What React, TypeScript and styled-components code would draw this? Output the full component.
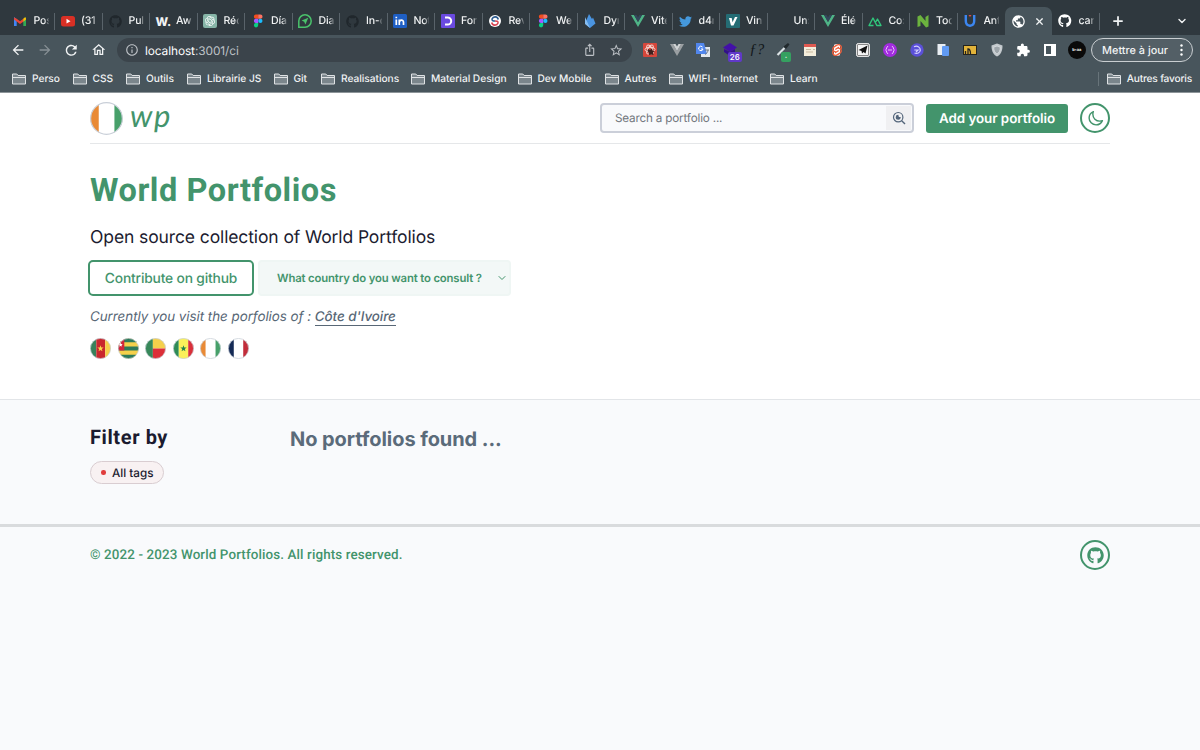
import React from "react";
import styled, { createGlobalStyle } from "styled-components";
import { FaGithub, FaTwitter } from "react-icons/fa";
import { MdArrowBack, MdArrowForward, MdRefresh, MdOutlineHome, MdInfoOutline, MdIosShare, MdStarBorder, MdExtension, MdPublic } from "react-icons/md";
import { SiSvelte, SiOpenai } from "react-icons/si";
import { HiOutlineMoon } from "react-icons/hi2";
import { Plus, X, ChevronDown } from "lucide-react";

const Global = createGlobalStyle`
  * { box-sizing: border-box; }
  body { margin: 0; background: #f9fafc; font-family: Inter, "Liberation Sans", sans-serif; overflow: hidden; text-rendering: geometricPrecision; }
  svg { display: block; flex: none; }
  button, input { font-family: inherit; text-rendering: inherit; }
`;

/* ---------- browser chrome ---------- */

const Chrome = styled.header`
  height: 93px;
  background: #48555c;
  border-bottom: 1px solid #8d9599;
  color: #f1f3f4;
`;
const TabStrip = styled.div`
  height: 35px;
  background: #2f383e;
  display: flex;
  padding: 7px 0 0 7px;
`;
const Tab = styled.div<{ $active?: boolean; $line?: boolean }>`
  position: relative;
  width: 47.5px;
  height: 28px;
  flex: none;
  display: flex;
  align-items: center;
  padding-left: 6px;
  gap: ${(p) => (p.$active ? 9 : 6.5)}px;
  border-radius: 7px 7px 0 0;
  background: ${(p) => (p.$active ? "#48555c" : "transparent")};
  &::after {
    content: "";
    display: ${(p) => (p.$line ? "block" : "none")};
    position: absolute;
    right: -0.5px;
    top: 6px;
    width: 1px;
    height: 17px;
    background: #59636a;
  }
`;
const TabIcon = styled.span`
  width: 14px;
  height: 14px;
  flex: none;
  display: grid;
  place-items: center;
`;
const TabTitle = styled.span`
  width: 15.5px;
  overflow: hidden;
  white-space: nowrap;
  font-size: 10.6px;
  letter-spacing: -0.15px;
  font-weight: 500;
  line-height: 16px;
  mask-image: linear-gradient(90deg, #000 70%, transparent 105%);
`;
const Wordmark = styled.b`
  font-size: 12px;
  font-weight: 800;
`;
const StripActions = styled.div`
  flex: 1;
  height: 28px;
  display: flex;
  align-items: center;
  justify-content: space-between;
  padding: 0 12px 0 11px;
`;
const Toolbar = styled.div`
  height: 30px;
  display: flex;
  align-items: center;
`;
const NavButtons = styled.div`
  width: 117px;
  padding-left: 5px;
  display: flex;
  & > span { width: 26.7px; display: grid; place-items: center; }
`;
const AddressBar = styled.div`
  width: 514.5px;
  height: 24px;
  border-radius: 12px;
  background: #3b444b;
  display: flex;
  align-items: center;
  padding: 0 8px 0 8px;
  color: #bdc1c6;
`;
const Url = styled.span`
  flex: 1;
  margin-left: 6px;
  font-size: 11.9px;
  letter-spacing: -0.1px;
  b { font-weight: 400; color: #fff; }
`;
const AddressActions = styled.div`
  display: flex;
  gap: 12.5px;
`;
const Extensions = styled.div`
  margin-left: 5.2px;
  display: flex;
`;
const Ext = styled.span`
  position: relative;
  width: 26.68px;
  height: 24px;
  display: grid;
  place-items: center;
`;
const ExtBadge = styled.i<{ $c: string }>`
  position: absolute;
  left: 11px;
  top: 14px;
  padding: 0 2px;
  min-width: 10px;
  height: 10px;
  border-radius: 2px;
  background: ${(p) => p.$c};
  font: 500 8px/10px Inter, sans-serif;
  text-align: center;
  color: #fff;
`;
const Formula = styled.i`
  font: italic 400 15px/16px "Liberation Serif", serif;
  color: #12171a;
`;
const Avatar = styled.span`
  width: 18px;
  height: 18px;
  border-radius: 50%;
  background: #0a0a0a;
  font-size: 4px;
  font-weight: 700;
  line-height: 18px;
  text-align: center;
`;
const SvelteDisc = styled.span`
  border-radius: 50%;
  background: linear-gradient(90deg, transparent 28%, #fff 28% 72%, transparent 72%);
`;
const UpdateButton = styled.div`
  margin-left: 1px;
  width: 102px;
  height: 24px;
  border: 1px solid #c9ced1;
  border-radius: 12px;
  background: #535f66;
  display: flex;
  align-items: center;
  justify-content: space-between;
  padding: 0 9px 0 10px;
  font-size: 10.9px;
  font-weight: 500;
  white-space: nowrap;
`;
const Bookmarks = styled.nav`
  height: 27px;
  padding: 0 8px 0 12px;
  display: flex;
  align-items: center;
`;
const Bookmark = styled.span<{ $w?: number }>`
  width: ${(p) => (p.$w ? p.$w + "px" : "auto")};
  display: flex;
  align-items: center;
  gap: 6px;
  font-size: 10.2px;
  font-weight: 500;
  letter-spacing: -0.03px;
  white-space: nowrap;
`;
const OtherBookmarks = styled.div`
  margin-left: auto;
  height: 14px;
  display: flex;
  align-items: center;
  padding-left: 8px;
  border-left: 1px solid #68747a;
  ${Bookmark} { letter-spacing: -0.2px; }
`;

/* ---------- page ---------- */

const Hero = styled.section`
  height: 307px;
  background: #fff;
  border-bottom: 1px solid #e2e5e8;
  padding: 0 90px;
`;
const SiteHeader = styled.div`
  height: 51px;
  border-bottom: 1px solid #e5e7e9;
  display: flex;
  align-items: center;
`;
const Brand = styled.div`
  flex: 1;
  display: flex;
  align-items: center;
  gap: 7px;
`;
const Script = styled.span`
  font: italic 400 31px/30px Lato, sans-serif;
  color: #43946c;
  letter-spacing: 1.5px;
  margin-top: -6px;
`;
const SearchBox = styled.div`
  width: 314px;
  height: 30px;
  border: 2px solid #cbcfd9;
  border-radius: 4px;
  background: #f9fafc;
  display: flex;
  align-items: center;
  justify-content: space-between;
  padding: 0 1px 0 13px;
  font-size: 11.7px;
  letter-spacing: -0.18px;
  color: #71767c;
`;
const SearchButton = styled.span`
  width: 25px;
  height: 24px;
  background: #f0f0f2;
  display: grid;
  place-items: center;
`;
const AddButton = styled.button`
  width: 142px;
  height: 29px;
  margin: 1px 12px 0 12px;
  padding: 1px 0 0;
  border: 0;
  border-radius: 3px;
  background: #43946c;
  color: #fff;
  font-size: 13.4px;
  letter-spacing: -0.05px;
  font-weight: 600;
  white-space: nowrap;
`;
const RoundButton = styled.span`
  width: 30px;
  height: 30px;
  border: 2px solid #43946c;
  border-radius: 50%;
  color: #43946c;
  display: grid;
  place-items: center;
`;
const Title = styled.h1`
  margin: 26px 0 0;
  font: 700 32.5px/40px Roboto, sans-serif;
  letter-spacing: 0.55px;
  color: #43946c;
`;
const Lead = styled.p`
  margin: 16px 0 0;
  font-size: 17.5px;
  letter-spacing: -0.11px;
  line-height: 24px;
  color: #1b1b2f;
  white-space: nowrap;
`;
const Actions = styled.div`
  margin: 10px 0 0 -2px;
  display: flex;
  align-items: center;
  gap: 4px;
`;
const Contribute = styled.button`
  width: 166px;
  height: 36px;
  padding: 1px 0 0;
  border: 2px solid #43946c;
  border-radius: 5px;
  background: #fff;
  color: #43946c;
  font-size: 13.8px;
  letter-spacing: -0.17px;
  font-weight: 500;
  white-space: nowrap;
`;
const CountrySelect = styled.div`
  width: 253px;
  height: 36px;
  border: 2px solid #eff6f4;
  border-radius: 4px;
  background: #f3f8f7;
  color: #43946c;
  display: flex;
  align-items: center;
  justify-content: space-between;
  padding: 0 1px 0 17px;
  font-size: 11.3px;
  letter-spacing: -0.14px;
  font-weight: 600;
  white-space: nowrap;
`;
const Visiting = styled.p`
  margin: 12px 0 0;
  font-size: 13.4px;
  letter-spacing: -0.04px;
  line-height: 19px;
  font-style: italic;
  color: #586776;
  white-space: nowrap;
  b { font-weight: 500; border-bottom: 1px solid #586776; }
`;
const FlagRow = styled.div`
  margin-top: 11px;
  display: flex;
  gap: 6.5px;
`;
const Listing = styled.section`
  height: 127px;
  border-bottom: 3px solid #d9dbdd;
  padding: 0 90px;
  display: flex;
`;
const Sidebar = styled.aside`
  width: 200px;
  padding-top: 24px;
`;
const FilterTitle = styled.h2`
  margin: 0;
  font: 700 20px/26px Roboto, sans-serif;
  letter-spacing: 0.6px;
  color: #1b1b2f;
`;
const Tag = styled.span`
  margin-top: 11px;
  width: 74px;
  height: 23px;
  border: 1px solid #d9cdd1;
  border-radius: 12px;
  background: #f8f1f2;
  display: flex;
  align-items: center;
  gap: 6.5px;
  padding-left: 10px;
  font-size: 11.7px;
  font-weight: 500;
  color: #1b1b2f;
  white-space: nowrap;
  &::before { content: ""; width: 4.5px; height: 4.5px; border-radius: 50%; background: #e03c3c; }
`;
const Empty = styled.h3`
  margin: 26px 0 0;
  font-size: 20px;
  letter-spacing: -0.07px;
  line-height: 26px;
  font-weight: 700;
  color: #5b6b7a;
`;
const Footer = styled.footer`
  padding: 13px 90px 0;
  display: flex;
  justify-content: space-between;
`;
const Copyright = styled.p`
  margin: 5px 0 0;
  font: 500 13.4px/21px Roboto, sans-serif;
  letter-spacing: 0.12px;
  color: #43946c;
`;

/* ---------- drawings ---------- */

const Svg = ({ s = 14, vb = 14, children }: { s?: number; vb?: number; children: React.ReactNode }) => (
  <svg width={s} height={s} viewBox={`0 0 ${vb} ${vb}`} fill="none">{children}</svg>
);
const Gmail = () => (
  <Svg><path d="M1 12V3l2.7 2.2V12z" fill="#4285f4" /><path d="M10.3 12V5.2L13 3v9z" fill="#34a853" /><path d="M1 3.4l2.7 1.3L7 7.3l3.3-2.6v3L7 10 3.7 7.5 1 5.6z" fill="#ea4335" /><path d="M10.3 4.7l1-1c.8-.6 1.7 0 1.7.8v1.1l-2.7 2.1z" fill="#fbbc04" /></Svg>
);
const Youtube = () => (
  <Svg><rect y="2" width="14" height="10.5" rx="2.5" fill="#d93025" /><path d="M5.5 4.8v4.8l4-2.4z" fill="#fff" /></Svg>
);
const Chat = () => (
  <Svg><rect width="14" height="14" rx="2" fill="#86b5a7" /><g transform="translate(2 2)"><SiOpenai size={10} color="#fff" /></g></Svg>
);
const Figma = () => (
  <Svg><path d="M5 .5h2.2v4.3H5a2.15 2.15 0 010-4.3z" fill="#f24e1e" /><path d="M7.2.5h2.2a2.15 2.15 0 010 4.3H7.2z" fill="#ff7262" /><path d="M5 4.8h2.2v4.3H5a2.15 2.15 0 010-4.3z" fill="#a259ff" /><circle cx="9.35" cy="6.95" r="2.15" fill="#1abcfe" /><path d="M5 9.1h2.2v2.2A2.15 2.15 0 115 9.1z" fill="#0acf83" /></Svg>
);
const Dialog = () => (
  <Svg><path d="M.8 13.2V7A6.2 6.2 0 117 13.2z" stroke="#4ac26b" strokeWidth="1.5" /><path d="M10.3 3.8L3.6 6.6l2.6 1.1 1.2 2.7z" fill="#4ac26b" /></Svg>
);
const Linked = () => (
  <Svg><rect width="14" height="14" rx="1.5" fill="#1f5fc4" /><path d="M3.3 5.5V11M3.3 2.8v1.4M6.3 11V5.5m0 3c0-3 4.2-3.2 4.2-.3V11" stroke="#fff" strokeWidth="1.7" /></Svg>
);
const Purple = () => (
  <Svg><rect width="14" height="14" rx="1" fill="#6a4ae0" /><path d="M4 3.4h2.6a3.6 3.6 0 010 7.2H4" stroke="#fff" strokeWidth="2" /></Svg>
);
const Swirl = () => (
  <Svg><circle cx="7" cy="7" r="6" fill="#fff" /><path d="M10.3 5.500A3.3 3.3 0 004 5c-.3 1.8 1.500 2 3 2" stroke="#2e5d91" strokeWidth="1.6" /><path d="M3.7 8.500a3.3 3.3 0 006.3.5c.3-1.8-1.500-2-3-2" stroke="#d94553" strokeWidth="1.6" /></Svg>
);
const Flame = () => (
  <Svg><path d="M6 0l3 5 1-1.500 2.500 6L7 14 2 9.500z" fill="#4a94e0" /><path d="M2 3l5 11L2 10z" fill="#86bdf0" /></Svg>
);
const Vue = ({ a = "#4fb487", b = "#33475b" }: { a?: string; b?: string }) => (
  <Svg><path d="M0 1h3l4 7 4-7h3L7 13z" fill={a} /><path d="M3 1h2.500L7 3.6 8.500 1H11L7 8z" fill={b} /></Svg>
);
const Vinyl = () => (
  <Svg><rect width="14" height="14" rx="1" fill="#246c74" /><path d="M3 4h2.7l.8 4.2L9 3h2.500L7.500 11.500H5z" fill="#fff" /></Svg>
);
const Nuxt = () => (
  <Svg><path d="M5.500 11.500H1L5 4l3.8 7.500H13L9.500 5 7.8 7.8" stroke="#30c67c" strokeWidth="1.4" strokeLinejoin="round" /></Svg>
);
const Node = () => (
  <Svg><path d="M1.500 13V2.500L4.500 1l5 6V3l3-2v11.500l-2.500 1-5.500-6.500v5z" fill="#6cb33e" /></Svg>
);
const Shield = () => (
  <Svg><path d="M2.8 1v6c0 3 2 4.5 4.2 4.800C9.200 11.500 11.200 10 11.200 7V1" stroke="#3c86f0" strokeWidth="2.4" /><path d="M5.500 1l1.500 2 1.500-2z" fill="#e64a45" /></Svg>
);
const Folder = () => (
  <svg width="14" height="12" viewBox="0 0 14 12" fill="#7b868c" stroke="#dfe2e4"><path d="M.5 11V1h4.3l1.3 1.500h7.4V11zM.5 4.500h13" /></svg>
);
const Dots = () => (
  <svg width="3" height="12" viewBox="0 0 3 12" fill="#fff"><circle cx="1.5" cy="1.5" r="1.2" /><circle cx="1.5" cy="6" r="1.2" /><circle cx="1.5" cy="10.5" r="1.2" /></svg>
);
const SearchEye = () => (
  <Svg><circle cx="6.2" cy="6.2" r="4.7" stroke="#53657a" strokeWidth="1.2" /><path d="M9.7 9.7L13 13" stroke="#53657a" strokeWidth="1.4" /><path d="M6.3 3.7a2.500 2.500 0 102.4 2.4H6.9z" fill="#53657a" /></Svg>
);

const star = "M10 7l.75 2.1 2.25.05-1.8 1.35.65 2.15L10 11.4l-1.85 1.25.65-2.15L7 9.15l2.25-.05z";
const flags: Record<string, React.ReactNode> = {
  cameroon: <><path fill="#37805a" d="M0 0h6v20H0z" /><path fill="#c9272d" d="M6 0h8.500v20H6z" /><path fill="#f5cf49" d="M14.500 0h5.500v20h-5.500z" /><path fill="#f9d94a" d={star} /></>,
  togo: <><path fill="#f5d04b" d="M0 0h20v20H0z" /><path fill="#2d7a5a" d="M0 0h20v4H0zM0 8h20v4H0zM0 16h20v4H0z" /><path fill="#d0263c" d="M0 0h6v12H0z" /><path fill="#fff" d="M2.500 4.500l.6 1.2 1.3.2-1 .9.3 1.3-1.2-.6-1.2.6.3-1.3-1-.9 1.3-.2z" /></>,
  benin: <><path fill="#37885a" d="M0 0h7.500v20H0z" /><path fill="#f5d04b" d="M7.500 0H20v10H7.500z" /><path fill="#dc2f38" d="M7.500 10H20v10H7.500z" /></>,
  senegal: <><path fill="#2e8b57" d="M0 0h5.500v20H0z" /><path fill="#fbf05a" d="M5.500 0h9v20h-9z" /><path fill="#d9303a" d="M14.500 0H20v20h-5.500z" /><path fill="#23824d" d={star} /></>,
  ivory: <><path fill="#fff" d="M0 0h20v20H0z" /><path fill="#e98a35" d="M0 0h5.3v20H0z" /><path fill="#47a06a" d="M14.8 0H20v20h-5.2z" /></>,
  france: <><path fill="#fff" d="M0 0h20v20H0z" /><path fill="#142a55" d="M0 0h5.500v20H0z" /><path fill="#c22d3a" d="M14.500 0H20v20h-5.500z" /></>,
};
const Flag = ({ name, size = 21 }: { name: string; size?: number }) => {
  const id = `clip-${name}-${size}`;
  return (
    <svg width={size} height={size} viewBox="0 0 20 20">
      <clipPath id={id}><circle cx="10" cy="10" r="9.7" /></clipPath>
      <g clipPath={`url(#${id})`}>{flags[name]}</g>
      <circle cx="10" cy="10" r="9.6" fill="none" stroke="#c9cfd8" strokeWidth=".7" />
    </svg>
  );
};

const tabs: [React.ReactNode, string][] = [
  [<Gmail />, "Pos"], [<Youtube />, "(31"], [<FaGithub size={13} color="#20272c" />, "Pul"], [<Wordmark>W.</Wordmark>, "Aw"],
  [<Chat />, "Réc"], [<Figma />, "Día"], [<Dialog />, "Dia"], [<FaGithub size={13} color="#20272c" />, "In-c"],
  [<Linked />, "Not"], [<Purple />, "For"], [<Swirl />, "Rev"], [<Figma />, "We"], [<Flame />, "Dyn"], [<Vue />, "Vite"],
  [<FaTwitter size={13} color="#4599dd" />, "d4r"], [<Vinyl />, "Vin"], [null, "Un:"], [<Vue />, "Élé"], [<Nuxt />, "Co:"],
  [<Node />, "Toc"], [<Shield />, "Ant"],
];

const extensions: React.ReactNode[] = [
  <Svg><rect width="14" height="14" rx="1" fill="#d5473b" /><g stroke="#f5d5d0"><ellipse cx="7" cy="6.5" rx="5" ry="2.2" /><ellipse cx="7" cy="6.5" rx="5" ry="2.2" transform="rotate(60 7 6.5)" /><ellipse cx="7" cy="6.5" rx="5" ry="2.2" transform="rotate(120 7 6.5)" /></g><path d="M5 6l2 1 2-1.500.5 2 2 .5-1.500 1.500.5 2.500-2.500-.5L6 12l-.2-2.500L4.500 8z" fill="#40201d" /></Svg>,
  <Vue a="#9a9fa2" b="#d0d3d4" />,
  <Svg><rect x="5" y="4" width="9" height="10" fill="#e3e7ec" /><path d="M0 0h8l3 11H0z" fill="#5186ec" /><path d="M6.500 4A2.2 2.2 0 107 6H5" stroke="#fff" /><path d="M8.500 7H13m-1 0c0 2-1.500 3.500-3 4.500" stroke="#6b7680" /></Svg>,
  <><Svg><path d="M7 0l7 4.500L7 9 0 4.500z" fill="#4310a8" /><path d="M1 6v3l6 4 5-3V6L7 9z" fill="#32108a" /></Svg><ExtBadge $c="#6039c8">26</ExtBadge></>,
  <Formula>ƒ?</Formula>,
  <><Svg><path d="M1.500 12l7-7" stroke="#dce3e5" strokeWidth="2.2" /><path d="M7.500 3.500L12 0l1.500 1.500L10 6z" fill="#21292d" /></Svg><ExtBadge $c="#35a060">·</ExtBadge></>,
  <Svg><rect x="1" y="1" width="12" height="12" fill="#f4eedc" /><path d="M1 1h12v3H1z" fill="#df5a51" /><path d="M3 6.500h5M3 9h7M10 6.500h2" stroke="#c9b9a0" /></Svg>,
  <SvelteDisc><SiSvelte size={12} color="#f0603c" /></SvelteDisc>,
  <Svg><rect x=".5" y=".5" width="13" height="13" rx="2" fill="#f4f4f4" stroke="#fff" /><rect x="1.3" y="1.3" width="11.4" height="11.4" rx="1.5" stroke="#333" strokeWidth=".7" /><path d="M11.500 2.500L2.500 7l3 1 .5 2.500L7.500 9l2 1.500z" fill="#111" /></Svg>,
  <Svg><circle cx="7" cy="7" r="7" fill="#a32ce0" /><path d="M5 3L3.500 5v1.2L2.500 7l1 .8V9L5 11M9 3l1.500 2v1.2l1 .8-1 .8V9L9 11M5 7h4" stroke="#e9c3fa" /></Svg>,
  <Svg><circle cx="7" cy="7" r="6.7" fill="#5b50d8" /><path d="M4 3.8c3-1.500 6.500 0 6.3 3.4C10 10 7 11 4.500 10M4.3 7H8L6 9" stroke="#d5d1ff" strokeWidth="1.2" /></Svg>,
  <Svg><rect x="1.5" y="1" width="8" height="11" fill="#e9eef3" /><rect x="6" y="3" width="7" height="10" rx="1" fill="#619bf4" /></Svg>,
  <Svg><rect x=".5" y="2.5" width="13" height="9" fill="#e2b33a" stroke="#24231d" /><path d="M2.500 11V8M5 11V6c2 0 2.500 1.500 2.500 5" stroke="#24231d" strokeWidth="1.3" /></Svg>,
  <Svg><path d="M7 .5l5.500 2C12.500 8 11 11.500 7 13.500 3 11.500 1.500 8 1.500 2.500z" fill="#c3c9cd" /><path d="M7 3l3.3 1.2C10.3 8 9 9.8 7 11 5 9.8 3.7 8 3.7 4.2z" fill="#9da5aa" stroke="#dfe3e5" strokeWidth=".7" /></Svg>,
  <MdExtension size={14.5} color="#fff" />,
  <Svg><rect x="2" y="2" width="10" height="10" stroke="#fff" strokeWidth="2" /><path d="M8 2h4v10H8z" fill="#fff" /></Svg>,
  <Avatar>b•aa</Avatar>,
];

const bookmarks: [string, number][] = [
  ["Perso", 60.5], ["CSS", 53.5], ["Outils", 61], ["Librairie JS", 86.5], ["Git", 47.5], ["Realisations", 90],
  ["Material Design", 106.5], ["Dev Mobile", 87], ["Autres", 64], ["WIFI - Internet", 101.5], ["Learn", 60],
];

export default function App() {
  return (
    <>
      <Global />
      <Chrome>
        <TabStrip>
          {tabs.map(([icon, title], i) => (
            <Tab key={i} $line={i < tabs.length - 1}>
              <TabIcon>{icon}</TabIcon>
              <TabTitle>{title}</TabTitle>
            </Tab>
          ))}
          <Tab $active>
            <TabIcon><MdPublic size={15} color="#fff" /></TabIcon>
            <X size={11} strokeWidth={2.6} />
          </Tab>
          <Tab $line>
            <TabIcon><FaGithub size={13.5} color="#fff" /></TabIcon>
            <TabTitle>car</TabTitle>
          </Tab>
          <StripActions>
            <Plus size={14} strokeWidth={3} />
            <ChevronDown size={12} strokeWidth={2.8} />
          </StripActions>
        </TabStrip>
        <Toolbar>
          <NavButtons>
            <span><MdArrowBack size={16} /></span>
            <span><MdArrowForward size={16} color="#879095" /></span>
            <span><MdRefresh size={16.5} /></span>
            <span><MdOutlineHome size={15.5} /></span>
          </NavButtons>
          <AddressBar>
            <MdInfoOutline size={14} />
            <Url><b>localhost</b>:3001/ci</Url>
            <AddressActions>
              <MdIosShare size={13.5} />
              <MdStarBorder size={14.5} />
            </AddressActions>
          </AddressBar>
          <Extensions>{extensions.map((e, i) => <Ext key={i}>{e}</Ext>)}</Extensions>
          <UpdateButton>Mettre à jour<Dots /></UpdateButton>
        </Toolbar>
        <Bookmarks>
          {bookmarks.map(([name, w]) => <Bookmark key={name} $w={w}><Folder />{name}</Bookmark>)}
          <OtherBookmarks><Bookmark><Folder />Autres favoris</Bookmark></OtherBookmarks>
        </Bookmarks>
      </Chrome>

      <Hero>
        <SiteHeader>
          <Brand><Flag name="ivory" size={33} /><Script>wp</Script></Brand>
          <SearchBox>Search a portfolio ...<SearchButton><SearchEye /></SearchButton></SearchBox>
          <AddButton>Add your portfolio</AddButton>
          <RoundButton><HiOutlineMoon size={17} strokeWidth={2} /></RoundButton>
        </SiteHeader>
        <Title>World Portfolios</Title>
        <Lead>Open source collection of World Portfolios</Lead>
        <Actions>
          <Contribute>Contribute on github</Contribute>
          <CountrySelect>What country do you want to consult ?<ChevronDown size={12} strokeWidth={2} /></CountrySelect>
        </Actions>
        <Visiting>Currently you visit the porfolios of : <b>Côte d'Ivoire</b></Visiting>
        <FlagRow>
          {["cameroon", "togo", "benin", "senegal", "ivory", "france"].map((f) => <Flag key={f} name={f} />)}
        </FlagRow>
      </Hero>

      <Listing>
        <Sidebar>
          <FilterTitle>Filter by</FilterTitle>
          <Tag>All tags</Tag>
        </Sidebar>
        <Empty>No portfolios found ...</Empty>
      </Listing>

      <Footer>
        <Copyright>© 2022 - 2023 World Portfolios. All rights reserved.</Copyright>
        <RoundButton><FaGithub size={17} /></RoundButton>
      </Footer>
    </>
  );
}
